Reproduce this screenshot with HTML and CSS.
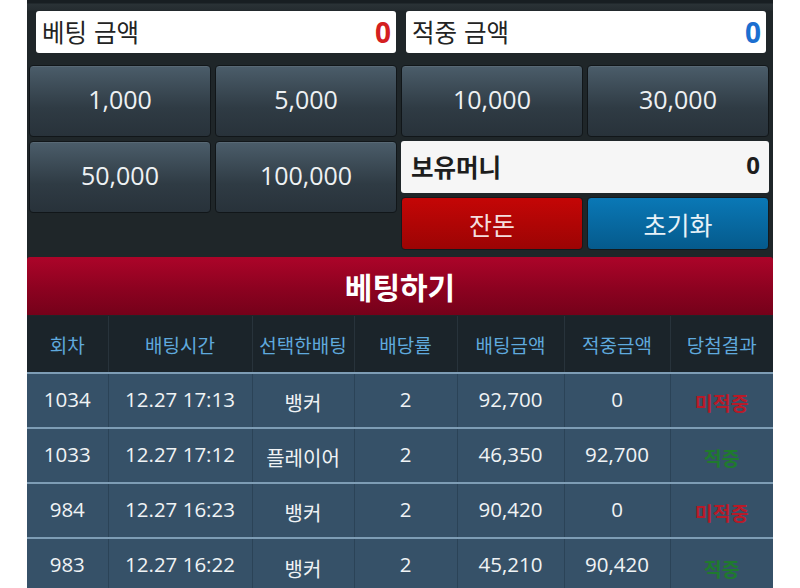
FILE: index.html
```html
<!DOCTYPE html>
<html lang="ko">
<head>
<meta charset="utf-8">
<title>베팅</title>
<link rel="stylesheet" href="styles.css">
</head>
<body>
<div class="panel">
  <div class="top-strip"></div>
  <div class="info-row">
    <div class="info-box"><span class="info-label">베팅 금액</span><span class="info-value red">0</span></div>
    <div class="info-box"><span class="info-label">적중 금액</span><span class="info-value blue">0</span></div>
  </div>
  <div class="keypad">
    <button class="chip">1,000</button>
    <button class="chip">5,000</button>
    <button class="chip">10,000</button>
    <button class="chip">30,000</button>
    <button class="chip tall">50,000</button>
    <button class="chip tall">100,000</button>
    <div class="balance"><span class="balance-label">보유머니</span><span class="balance-value">0</span></div>
    <button class="action action-red">잔돈</button>
    <button class="action action-blue">초기화</button>
  </div>
  <button class="bet-bar">베팅하기</button>
  <table class="history">
    <colgroup>
      <col class="c1"><col class="c2"><col class="c3"><col class="c4"><col class="c5"><col class="c6"><col class="c7">
    </colgroup>
    <thead>
      <tr><th>회차</th><th>배팅시간</th><th>선택한배팅</th><th>배당률</th><th>배팅금액</th><th>적중금액</th><th>당첨결과</th></tr>
    </thead>
    <tbody>
      <tr><td>1034</td><td>12.27 17:13</td><td class="ko">뱅커</td><td>2</td><td>92,700</td><td>0</td><td class="ko lose">미적중</td></tr>
      <tr><td>1033</td><td>12.27 17:12</td><td class="ko">플레이어</td><td>2</td><td>46,350</td><td>92,700</td><td class="ko win">적중</td></tr>
      <tr><td>984</td><td>12.27 16:23</td><td class="ko">뱅커</td><td>2</td><td>90,420</td><td>0</td><td class="ko lose">미적중</td></tr>
      <tr><td>983</td><td>12.27 16:22</td><td class="ko">뱅커</td><td>2</td><td>45,210</td><td>90,420</td><td class="ko win">적중</td></tr>
    </tbody>
  </table>
</div>
</body>
</html>
```
FILE: styles.css
```css
* { box-sizing: border-box; }
html, body { margin: 0; padding: 0; background: #ffffff; }
body {
  font-family: "Open Sans", "Noto Sans CJK KR", sans-serif;
  overflow: hidden;
  height: 588px;
}
.panel {
  margin-left: 27px;
  width: 746px;
  background: #1f2629;
  min-height: 588px;
}
.top-strip {
  height: 11px;
  background: linear-gradient(#181e22 0, #181e22 3px, #2a3236 4px, #252c30 10px, #1f2629 11px);
}
.info-row {
  display: flex;
  gap: 10px;
  padding: 0 7px 0 9px;
}
.info-box {
  flex: 1;
  height: 42px;
  background: #ffffff;
  border-radius: 3px;
  display: flex;
  align-items: center;
  justify-content: space-between;
  padding: 0 5px 0 6px;
}
.info-label {
  font-family: "Noto Sans CJK KR", sans-serif;
  font-size: 24.5px;
  color: #232323;
  line-height: 1;
}
.info-value {
  font-family: "Open Sans", sans-serif;
  font-weight: 700;
  font-size: 28px;
  line-height: 1;
}
.red { color: #d4201f; }
.blue { color: #1b6fd0; }
.keypad {
  display: grid;
  grid-template-columns: repeat(4, 182px);
  grid-template-rows: 72px 52px 53px;
  column-gap: 4px;
  row-gap: 4px;
  padding: 12px 4px 0 2px;
}
.chip {
  height: 72px;
  border: 1px solid #111619;
  border-radius: 4px;
  background: linear-gradient(#4b5d6a, #2f3b44 60%, #28323a);
  box-shadow: inset 0 1px 0 rgba(255,255,255,0.08);
  color: #eef1f3;
  font-family: "Open Sans", sans-serif;
  font-size: 25px;
  padding: 0 0 5px 0;
}
.chip.tall { grid-row: 2 / 4; align-self: start; }
.balance {
  grid-column: 3 / 5;
  grid-row: 2;
  background: #f6f6f6;
  border-radius: 3px;
  display: flex;
  align-items: center;
  justify-content: space-between;
  padding: 0 9px 0 10px;
}
.balance-label {
  font-family: "Noto Sans CJK KR", sans-serif;
  font-weight: 700;
  font-size: 24.5px;
  color: #1d1d1d;
  line-height: 1;
}
.balance-value {
  font-weight: 700;
  font-size: 24px;
  color: #1d1d1d;
  line-height: 1;
  padding-bottom: 4px;
}
.action {
  grid-row: 3;
  border: 1px solid #141a1d;
  border-radius: 4px;
  color: #ffffff;
  font-family: "Noto Sans CJK KR", sans-serif;
  font-size: 25px;
  padding: 0;
}
.action-red { background: linear-gradient(#c40606, #9c0404); color: #f4dede; }
.action-blue { background: linear-gradient(#0a78b6, #055a8c); color: #e8f2f8; }
.bet-bar {
  display: block;
  width: 100%;
  height: 58px;
  margin-top: 7px;
  border: 0;
  border-radius: 3px 3px 0 0;
  background: linear-gradient(#ac0429, #8c0220 55%, #75011a);
  color: #ffffff;
  font-family: "Noto Sans CJK KR", sans-serif;
  font-weight: 700;
  font-size: 30px;
  padding: 0;
}
.history {
  width: 746px;
  border-collapse: collapse;
  table-layout: fixed;
  margin-top: 1px;
}
.c1 { width: 81px; } .c2 { width: 144px; } .c3 { width: 102px; } .c4 { width: 103px; }
.c5 { width: 107px; } .c6 { width: 106px; } .c7 { width: 103px; }
.history th {
  height: 57px;
  background: #1b242a;
  color: #5fa9dd;
  font-family: "Noto Sans CJK KR", sans-serif;
  font-weight: 400;
  font-size: 19px;
  border-left: 1px solid #28333b;
  padding: 0;
}
.history th:first-child, .history td:first-child { border-left: 0; }
.history td {
  height: 55px;
  background: #365168;
  color: #f0f3f5;
  font-size: 20.5px;
  text-align: center;
  border-top: 2px solid #7e9db5;
  border-left: 1px solid #2b4357;
  padding: 0 0 4px 0;
}
.history td.ko {
  font-family: "Noto Sans CJK KR", sans-serif;
  font-size: 20px;
  padding: 4px 0 0 0;
}
.history td.lose { color: #b81a28; font-weight: 700; font-size: 19.5px; }
.history td.win { color: #1f7a2e; font-weight: 700; font-size: 19.5px; }
```
